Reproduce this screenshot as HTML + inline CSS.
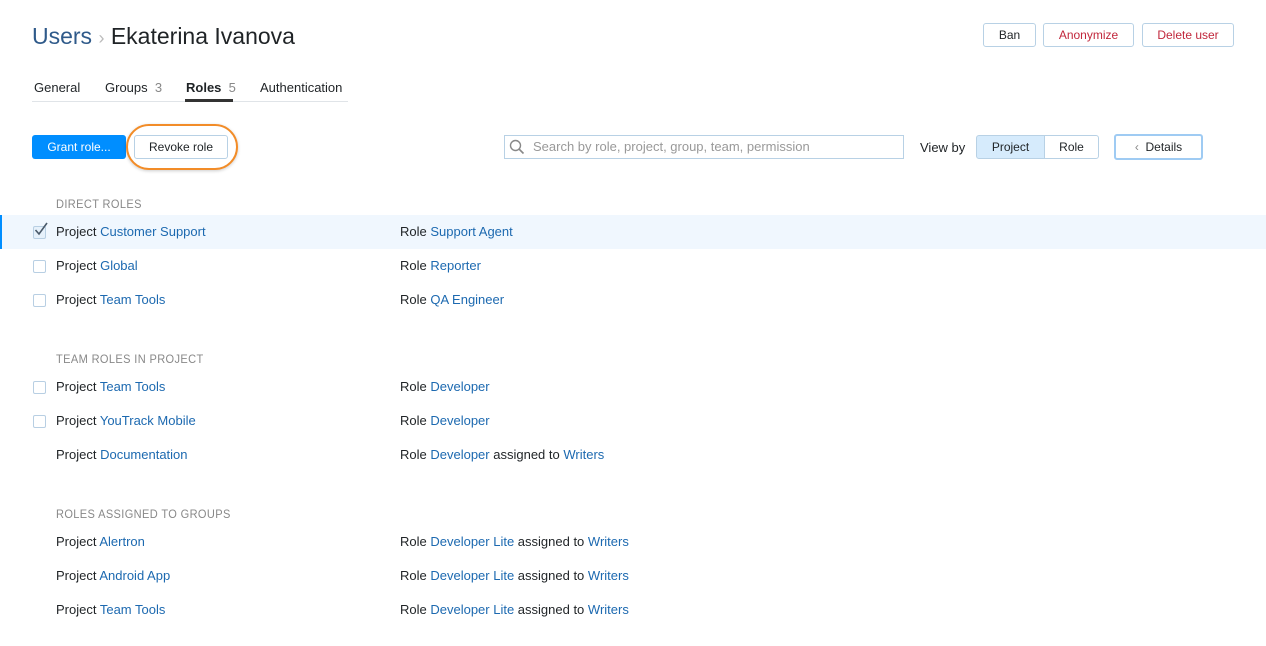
<!DOCTYPE html>
<html><head><meta charset="utf-8"><style>
*{box-sizing:border-box;margin:0;padding:0}
body{width:1266px;height:646px;background:#fff;font-family:"Liberation Sans",sans-serif;font-size:13px;color:#1f2326;position:relative;overflow:hidden}
.a{position:absolute}
a{color:#1c69b0;text-decoration:none}
.btn{position:absolute;height:24px;border:1px solid #b8d1e5;border-radius:3px;background:#fff;font-size:12px;line-height:22px;text-align:center}
.sec{position:absolute;left:56px;font-size:12px;letter-spacing:0.4px;color:#888;transform:scaleX(0.92);transform-origin:left}
.row{position:absolute;left:0;width:1266px;height:34px;line-height:34px}
.row .p{position:absolute;left:56px}
.row .r{position:absolute;left:400px}
.cb{position:absolute;left:33px;top:11px;width:13px;height:13px;border:1px solid #b8cfe3;border-radius:2px;background:#fff}
</style></head><body>
<div class="a" style="left:32px;top:23px;font-size:23px;color:#2f5a8a">Users <span style="color:#bbb;font-size:18px">›</span> <span style="color:#1f2326">Ekaterina Ivanova</span></div>
<div class="btn" style="left:983px;top:23px;width:53px">Ban</div>
<div class="btn" style="left:1043px;top:23px;width:91px;color:#c1273c">Anonymize</div>
<div class="btn" style="left:1142px;top:23px;width:92px;color:#c1273c">Delete user</div>

<div class="a" style="left:32px;top:101px;width:316px;height:1px;background:#e0e4e8"></div>
<div class="a" style="left:34px;top:80px">General</div>
<div class="a" style="left:105px;top:80px">Groups <span style="color:#888">&nbsp;3</span></div>
<div class="a" style="left:186px;top:80px;font-weight:bold">Roles <span style="color:#888;font-weight:normal">&nbsp;5</span></div>
<div class="a" style="left:185px;top:99px;width:48px;height:3px;background:#333"></div>
<div class="a" style="left:260px;top:80px">Authentication</div>

<div class="a" style="left:32px;top:135px;width:94px;height:24px;background:#008eff;border-radius:3px;color:#fff;font-size:12px;line-height:24px;text-align:center">Grant role...</div>
<div class="a" style="left:126px;top:124px;width:112px;height:46px;border:2px solid #f28c28;border-radius:23px;box-shadow:0 1px 3px rgba(0,0,0,.2)"></div>
<div class="btn" style="left:134px;top:135px;width:94px">Revoke role</div>

<div class="a" style="left:504px;top:135px;width:400px;height:24px;border:1px solid #b8d1e5;color:#999;line-height:22px;padding-left:28px;font-size:13px">Search by role, project, group, team, permission</div>
<svg class="a" style="left:509px;top:139px" width="16" height="16"><circle cx="6.5" cy="6.5" r="5" fill="none" stroke="#888" stroke-width="1.4"/><path d="M10 10l4.5 4.5" stroke="#888" stroke-width="1.6"/></svg>
<div class="a" style="left:920px;top:140px">View by</div>
<div class="a" style="left:976px;top:135px;width:69px;height:24px;border:1px solid #b8d1e5;background:#d6ebfc;border-radius:3px 0 0 3px;line-height:22px;text-align:center;font-size:12px">Project</div>
<div class="a" style="left:1044px;top:135px;width:55px;height:24px;border:1px solid #b8d1e5;border-radius:0 3px 3px 0;line-height:22px;text-align:center;font-size:12px">Role</div>
<div class="a" style="left:1114px;top:134px;width:89px;height:26px;border:2px solid #9fcbf3;border-radius:3px;line-height:22px;text-align:center;font-size:12px"><span style="color:#888">‹</span>&nbsp; Details</div>

<div class="sec" style="top:197px">DIRECT ROLES</div>
<div class="row" style="top:215px;background:#f0f7fe"><div class="a" style="left:0;top:0;width:2px;height:34px;background:#008eff"></div><div class="cb" style="background:#e6f1fb"></div><svg class="a" style="left:33px;top:6px" width="16" height="16"><path d="M2.5 9l3.5 4L14 2" fill="none" stroke="#4a5a6a" stroke-width="1.6"/></svg><span class="p">Project <a>Customer Support</a></span><span class="r">Role <a>Support Agent</a></span></div>
<div class="row" style="top:249px"><div class="cb"></div><span class="p">Project <a>Global</a></span><span class="r">Role <a>Reporter</a></span></div>
<div class="row" style="top:283px"><div class="cb"></div><span class="p">Project <a>Team Tools</a></span><span class="r">Role <a>QA Engineer</a></span></div>

<div class="sec" style="top:352px">TEAM ROLES IN PROJECT</div>
<div class="row" style="top:370px"><div class="cb"></div><span class="p">Project <a>Team Tools</a></span><span class="r">Role <a>Developer</a></span></div>
<div class="row" style="top:404px"><div class="cb"></div><span class="p">Project <a>YouTrack Mobile</a></span><span class="r">Role <a>Developer</a></span></div>
<div class="row" style="top:438px"><span class="p">Project <a>Documentation</a></span><span class="r">Role <a>Developer</a> assigned to <a>Writers</a></span></div>

<div class="sec" style="top:507px">ROLES ASSIGNED TO GROUPS</div>
<div class="row" style="top:525px"><span class="p">Project <a>Alertron</a></span><span class="r">Role <a>Developer Lite</a> assigned to <a>Writers</a></span></div>
<div class="row" style="top:559px"><span class="p">Project <a>Android App</a></span><span class="r">Role <a>Developer Lite</a> assigned to <a>Writers</a></span></div>
<div class="row" style="top:593px"><span class="p">Project <a>Team Tools</a></span><span class="r">Role <a>Developer Lite</a> assigned to <a>Writers</a></span></div>
</body></html>
